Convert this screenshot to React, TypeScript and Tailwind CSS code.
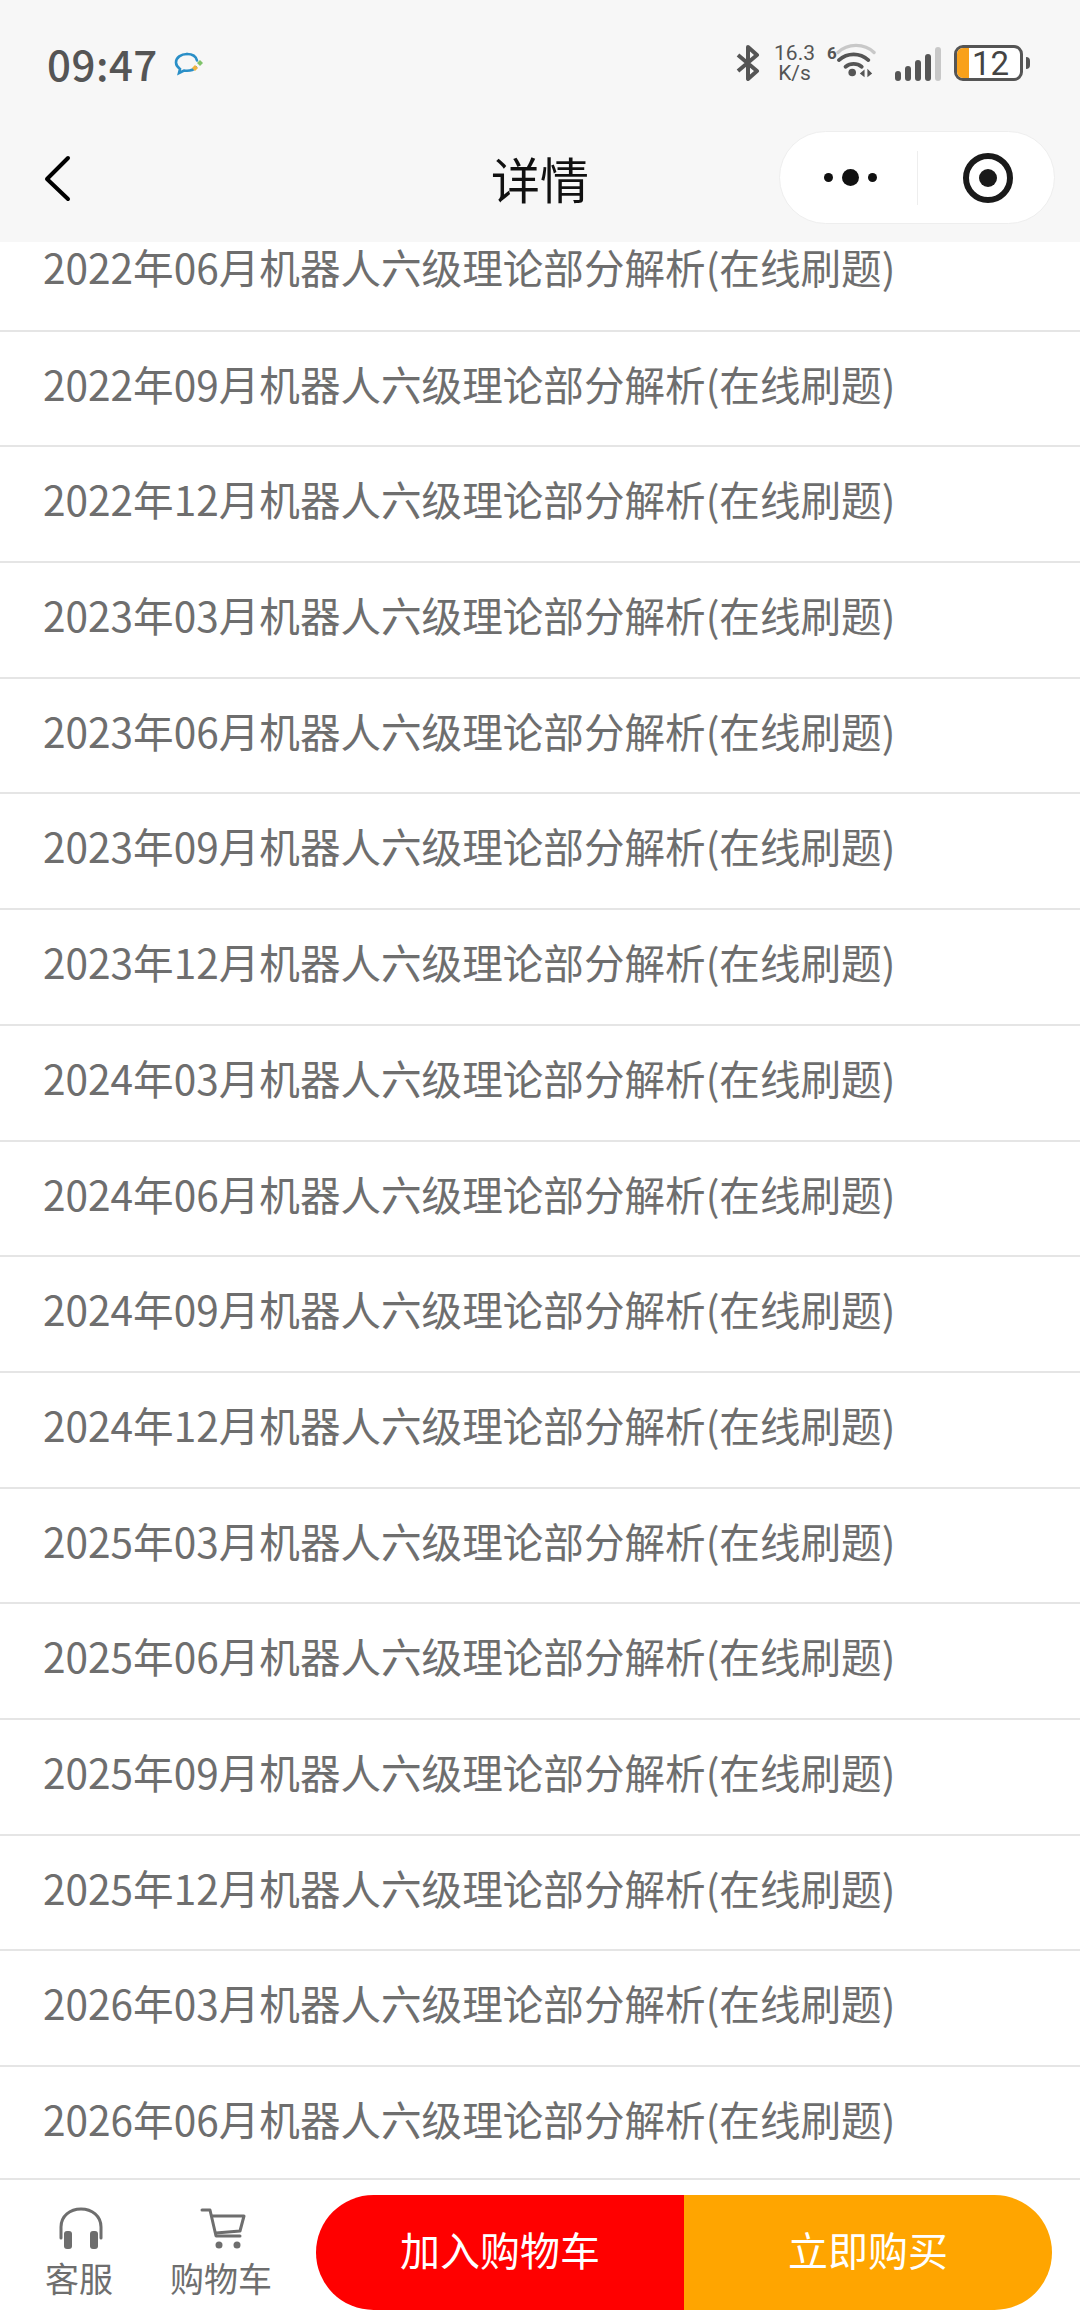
const titles = [
  '2022年06月', '2022年09月', '2022年12月',
  '2023年03月', '2023年06月', '2023年09月', '2023年12月',
  '2024年03月', '2024年06月', '2024年09月', '2024年12月',
  '2025年03月', '2025年06月', '2025年09月', '2025年12月',
  '2026年03月', '2026年06月',
];

function StatusBar() {
  return (
    <div className="flex h-[122px] items-center justify-between pl-[47px] pr-[50px] pt-[4px]">
      <div className="flex items-center gap-[15px]">
        <span className="text-[42px] font-medium leading-none tracking-[0.5px] text-[#555]">09:47</span>
        <svg width="32" height="32" viewBox="0 0 32 32" fill="none" className="mt-[3px]">
          <path d="M14 5c-6 0-11 3.500-11 8.500 0 3 2 5 4 6.500l-1 4 5-2.500c4 .5 9 0 12-3" stroke="#2a8fc7" strokeWidth="2.600" strokeLinecap="round" />
          <path d="M14 5c5 0 9 2.500 10 6.500" stroke="#2a8fc7" strokeWidth="2.600" strokeLinecap="round" />
          <path d="M27 11l3 3-3 3-3-3z" fill="#7fc36a" />
          <path d="M22 16l3 3-3 3-3-3z" fill="#f2b33d" />
        </svg>
      </div>
      <div className="flex items-center">
        <svg width="24" height="36" viewBox="0 0 24 36" fill="none" stroke="#555" strokeWidth="4" strokeLinejoin="round">
          <path d="M2 10l19 16-9 8V2l9 8L2 26" />
        </svg>
        <div className="ml-[14px] flex flex-col items-center text-[21px] leading-[20px] text-[#555] [font-family:Roboto,sans-serif]">
          <span>16.3</span>
          <span>K/s</span>
        </div>
        <div className="relative ml-[12px] h-[40px] w-[46px]">
          <span className="absolute left-0 top-[-2px] text-[17px] font-bold leading-[24px] text-[#555] [font-family:Roboto,sans-serif]">6</span>
          <svg width="40" height="38" viewBox="0 0 42 40" fill="none" className="absolute left-[9px] top-0">
            <path d="M2 10C12 0 30 0 40 10" stroke="#c8c8c8" strokeWidth="3.500" strokeLinecap="round" />
            <path d="M3 18c9-8 22-8 31 0" stroke="#555" strokeWidth="4" strokeLinecap="round" />
            <path d="M10 25c5-4 12-4 17 0" stroke="#555" strokeWidth="4" strokeLinecap="round" />
            <circle cx="17" cy="31" r="4" fill="#555" />
            <path d="M25 32l5-4v8zM33 27v9l5-4z" fill="#555" />
          </svg>
        </div>
        <div className="ml-[22px] flex h-[36px] items-end gap-[4px]">
          <div className="h-[10px] w-[6px] rounded-full bg-[#555]" />
          <div className="h-[15px] w-[6px] rounded-full bg-[#555]" />
          <div className="h-[21px] w-[6px] rounded-full bg-[#555]" />
          <div className="h-[27px] w-[6px] rounded-full bg-[#555]" />
          <div className="h-[34px] w-[6px] rounded-full bg-[#c8c8c8]" />
        </div>
        <div className="ml-[13px] flex items-center gap-[3px]">
          <div className="relative flex h-[36px] w-[69px] items-center overflow-hidden rounded-[9px] border-[3px] border-[#555] bg-white">
            <div className="h-full w-[12px] bg-[#f9a11b]" />
            <span className="ml-[3px] text-[33px] font-normal leading-none text-[#444] [font-family:Roboto,sans-serif]">12</span>
          </div>
          <div className="h-[12px] w-[4px] rounded-r-full bg-[#555]" />
        </div>
      </div>
    </div>
  );
}

function NavBar() {
  return (
    <div className="relative flex h-[120px] items-center justify-center">
      <svg width="30" height="50" viewBox="0 0 30 50" fill="none" className="absolute left-[43px] top-[32px]">
        <path d="M25 4L4 25l21 20" stroke="#000" strokeWidth="4" strokeLinecap="round" strokeLinejoin="round" />
      </svg>
      <span className="mb-[10px] text-[49px] leading-none text-[#111]">详情</span>
      <div className="absolute left-[779px] top-[9px] flex h-[93px] w-[276px] items-center rounded-full border border-[#eeeeee] bg-white">
        <div className="flex w-[137px] items-center justify-center gap-[9px] pl-[4px]">
          <div className="h-[9px] w-[9px] rounded-full bg-[#111]" />
          <div className="h-[17px] w-[17px] rounded-full bg-[#111]" />
          <div className="h-[9px] w-[9px] rounded-full bg-[#111]" />
        </div>
        <div className="h-[54px] w-px bg-[#eeeeee]" />
        <div className="flex flex-1 items-center justify-center pl-[4px]">
          <div className="flex h-[50px] w-[50px] items-center justify-center rounded-full border-[6px] border-[#1a1a1a]">
            <div className="h-[18px] w-[18px] rounded-full bg-[#1a1a1a]" />
          </div>
        </div>
      </div>
    </div>
  );
}

function BottomBar() {
  return (
    <div className="flex h-[146px] items-start border-t-2 border-[#e5e5e5] bg-white pl-[42px] pt-[15px]">
      <div className="flex w-[74px] flex-col items-center">
        <svg width="46" height="44" viewBox="0 0 46 44" fill="none" className="ml-[4px] mt-[12px]">
          <path d="M3 31V20C3 9 12 2 23 2s20 7 20 18v11" stroke="#6e6e6e" strokeWidth="3" strokeLinecap="round" />
          <rect x="6" y="24" width="8" height="18" rx="3" fill="#6e6e6e" />
          <rect x="32" y="24" width="8" height="18" rx="3" fill="#6e6e6e" />
        </svg>
        <span className="mt-[8px] whitespace-nowrap text-[34px] leading-[38px] text-[#6e6e6e]">客服</span>
      </div>
      <div className="ml-[53px] flex w-[104px] flex-col items-center">
        <svg width="46" height="42" viewBox="0 0 46 42" fill="none" className="ml-[3px] mt-[13px]">
          <path d="M2 2h8l6 26h24" stroke="#6e6e6e" strokeWidth="3" strokeLinecap="round" strokeLinejoin="round" />
          <path d="M11 8h33l-4 15-24 2" stroke="#6e6e6e" strokeWidth="3" strokeLinejoin="round" />
          <circle cx="19" cy="37" r="3.500" fill="#6e6e6e" />
          <circle cx="37" cy="37" r="3.500" fill="#6e6e6e" />
        </svg>
        <span className="mt-[9px] whitespace-nowrap text-[34px] leading-[38px] text-[#6e6e6e]">购物车</span>
      </div>
      <div className="ml-[43px] flex h-[115px] w-[368px] items-center justify-center rounded-l-full bg-[#ff0000] pb-[8px] text-[40px] text-white">
        加入购物车
      </div>
      <div className="flex h-[115px] w-[368px] items-center justify-center rounded-r-full bg-[#ffa500] pb-[8px] text-[40px] text-white">
        立即购买
      </div>
    </div>
  );
}

export default function App() {
  return (
    <div className="flex h-[2324px] w-[1080px] flex-col overflow-hidden bg-white [font-family:'Noto_Sans_CJK_SC','Noto_Sans',sans-serif]">
      <div className="z-10 h-[242px] shrink-0 bg-[#f7f7f7]">
        <StatusBar />
        <NavBar />
      </div>
      <div className="h-[1936px] shrink-0 overflow-hidden">
        {titles.map((t, i) => (
          <div
            key={t}
            className={
              i === 0
                ? 'flex h-[89.7px] items-end border-b-2 border-[#e5e5e5] pb-[42.5px] pl-[43px] text-[40.6px] leading-none text-[#6e6e6e]'
                : 'flex h-[115.7px] items-center border-b-2 border-[#e5e5e5] pb-[9px] pl-[43px] text-[40.6px] leading-none text-[#6e6e6e]'
            }
          >
            {t}机器人六级理论部分解析(在线刷题)
          </div>
        ))}
      </div>
      <BottomBar />
    </div>
  );
}
